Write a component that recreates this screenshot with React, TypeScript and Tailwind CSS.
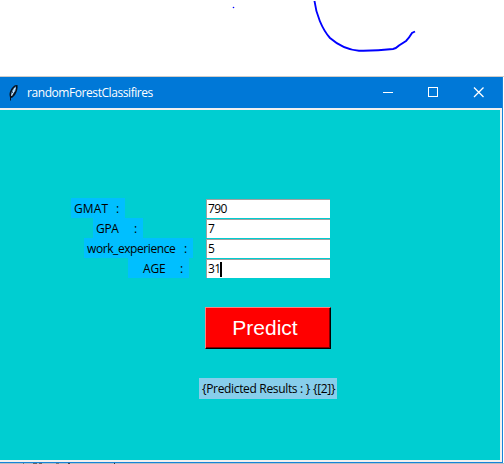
import React from "react";

const fields = [
  { name: "GMAT", value: "790", row: "pl-[71px]", box: "w-[54px] pl-[3px]", nameBox: "w-[42px] tracking-[0.1px]", focus: false },
  { name: "GPA", value: "7", row: "pl-[93px]", box: "w-[50px] pl-[3px]", nameBox: "w-[38px] tracking-[-0.3px]", focus: false },
  { name: "work_experience", value: "5", row: "pl-[84px]", box: "w-[109px] pl-[3px]", nameBox: "w-[97px] tracking-[-0.42px]", focus: false },
  { name: "AGE", value: "31", row: "pl-[128px]", box: "w-[61px] pl-[15px]", nameBox: "w-[37px] tracking-[-0.2px]", focus: true },
];

function Feather() {
  return (
    <svg width="11" height="17" viewBox="0 0 11 17" className="block">
      <path d="M2 16.5V13.5L1.5 11C1.5 7 4 3 7 1.2L9.5 1C10 4 9 8 7 11L4.5 13.5L3 14V16.5Z" fill="#08121e" />
      <path d="M3 11C3 8 5 4 8 2.2C8.4 5 7 8 5.5 10L4 11.5Z" fill="#6faee0" />
      <path d="M3.5 12L7 4" stroke="#fff" strokeWidth="0.8" fill="none" />
      <path d="M4 8L5 8.5M7 8L5 11" stroke="#08121e" strokeWidth="0.8" fill="none" />
    </svg>
  );
}

function TitleBar() {
  return (
    <header className="flex h-[31px] items-center bg-[#0078d7] pl-2 text-white">
      <Feather />
      <h1 className="ml-2 w-[345px] whitespace-nowrap pt-px text-[12px] leading-4 tracking-[-0.43px]">randomForestClassifires</h1>
      <svg width="120" height="31" viewBox="0 0 120 31" fill="none" stroke="#fff" className="shrink-0">
        <path d="M11 15.5h10" />
        <rect x="56.5" y="10.5" width="9" height="9" />
        <path d="M102 10.5l9.5 9.5M111.5 10.5l-9.5 9.5" strokeWidth="1.3" />
      </svg>
    </header>
  );
}

export default function App() {
  return (
    <div className="flex h-[464px] w-[504px] flex-col overflow-hidden bg-white font-['Open_Sans','Noto_Sans',sans-serif] text-[12px] text-black">
      <svg width="504" height="76" viewBox="0 0 504 76" fill="none" className="block shrink-0">
        <circle cx="233.5" cy="7.5" r="0.8" fill="#00f" />
        <path d="M314.5 1C316 14 322 29 330 38C338 45 348 50 359 50.7Q376 51 393 49Q396 48.5 399 45.5L406 41Q409 38 412 33L415 31.5" stroke="#00f" strokeWidth="1.9" />
      </svg>
      <div className="h-px w-full bg-[#d0cdca]" />
      <main className="w-[503px] border-r border-b border-[#1683d8] bg-[#f0f0f0]">
        <TitleBar />
        <div className="pt-[2px] pr-[2px] pb-[2px]">
          <section className="h-[350px] bg-[#00ced1] pt-[88px]">
            {fields.map((f) => (
              <div key={f.name} className="flex h-5">
                <div className={`flex w-[206px] ${f.row}`}>
                  <label className={`flex h-5 items-center whitespace-nowrap bg-[#00bfff] pt-[2px] ${f.box}`}>
                    <span className={f.nameBox}>{f.name}</span>
                    <span>:</span>
                  </label>
                </div>
                <div className="mt-px flex h-[19px] w-[124px] items-center border-t border-l border-[#a0a0a0] bg-white pl-px tracking-[-0.6px]">
                  <span>{f.value}</span>
                  {f.focus && <span className="-ml-px h-[15px] w-[2px] bg-black" />}
                </div>
              </div>
            ))}
            <button className="mt-[29px] ml-[205px] flex h-[42px] w-[126px] items-center justify-center border border-t-[#ff8080] border-r-black border-b-black border-l-[#ff8080] bg-[#f00] pr-[6px] font-['Liberation_Sans',Arial,sans-serif] text-[21px] text-white shadow-[inset_-1px_-1px_0_#800000]">
              Predict
            </button>
            <div className="mt-[29px] ml-[199px] flex h-[21px] w-[138px] items-center bg-[#87ceeb] pt-px pl-[3px] tracking-[-0.33px]">
              <span className="w-[111px] whitespace-pre">{"{Predicted Results : }"}</span>
              <span>{"{[2]}"}</span>
            </div>
          </section>
        </div>
      </main>
      <div className="flex h-px bg-[#b8bdc2]">
        <span className="ml-[23px] h-px w-px bg-[#777]" />
        <span className="ml-[9px] h-px w-[4px] bg-[#666]" />
        <span className="ml-[2px] h-px w-[3px] bg-[#666]" />
        <span className="ml-[14px] h-px w-[3px] bg-[#777]" />
        <span className="ml-[9px] h-px w-[2px] bg-[#444]" />
        <span className="ml-[44px] h-px w-px bg-[#333]" />
      </div>
    </div>
  );
}
